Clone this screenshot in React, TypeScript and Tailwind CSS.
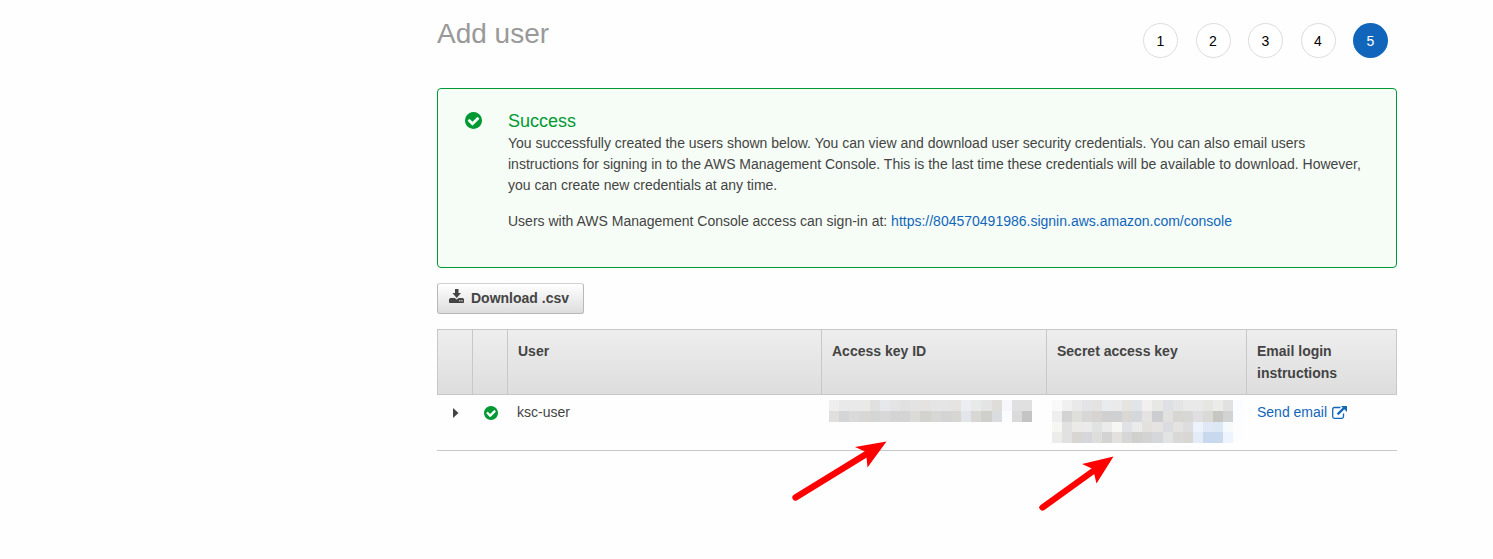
import React from "react";

const keyRows = [
  ["#eeeeee", "#e9e9e9", "#e9e9e9", "#e9e9e8", "#e0e0e0", "#e6e8eb", "#e4e4e4", "#e1e1e1", "#e3e3e3", "#e5e3e1", "#e5e5e5", "#e4e5e4", "#e6e4e2", "#ebedf0", "#e7eae8", "#e4e4e4", "#dfddda", "#f5f7fa", "#e0e0e0", "#e0e0e0"],
  ["#e0dfdd", "#d3d5d7", "#dadada", "#d8d7d6", "#d4d6d5", "#d8d8d8", "#d4d4d4", "#d4d4d4", "#dbdad7", "#d2d2cf", "#d7d7d6", "#d4d4d4", "#d8d6d3", "#e2e5e9", "#d8d7d3", "#cfcfcc", "#dadce0", "#fbfcff", "#dadada", "#c4c4c4"],
];

const secretRows = [
  ["#f9f9f9", "#f0f0f0", "#e9e9e9", "#e3e4e6", "#e4e3e1", "#e9ecef", "#eaeaea", "#e6e4e1", "#e1e4e8", "#f1f0ee", "#e7e7e5", "#dee0e3", "#e4e4e4", "#e9e9e9", "#e7eae8", "#e5e5e2", "#ebebea", "#e1e1e1", "#fafcff"],
  ["#eeeeee", "#d3d3d3", "#dededb", "#d7d7d7", "#d6d4d3", "#d0d0d0", "#cfd0d2", "#dad8d5", "#d4d7dc", "#e5e3e1", "#cbcdd0", "#e1e1e0", "#d7d6d3", "#d7d7d5", "#dfdfe1", "#dbd9d6", "#c6c6c2", "#d0d2d4", "#fcfdfe"],
  ["#f6f6f3", "#e1e1e1", "#ebeae8", "#ebebeb", "#e1e3e2", "#ebebeb", "#f6f6f4", "#e0e2e5", "#ebebeb", "#e2e1de", "#e5e4e2", "#dadce0", "#e5e3e1", "#dddddf", "#edf3fa", "#dfe8f4", "#dbe7f2", "#f7fafd", "#fdfdfe"],
  ["#eeecea", "#e1e1e1", "#d8d6d3", "#d6d7da", "#dddddc", "#d3d3d3", "#e2e1de", "#d6d6d6", "#d0d0cf", "#d3d3d3", "#d6d7da", "#e2e4e3", "#dad9d7", "#d9d7d4", "#e4edf7", "#c9d9ed", "#c9d9ed", "#eef4fd", "#fcfdfe"],
];

function Mosaic({ rows }: { rows: string[][] }) {
  return (
    <div className="flex flex-col">
      {rows.map((row, r) => (
        <div key={r} className="flex h-[10.75px]">
          {row.map((color, c) => (
            <span key={c} className="flex-1" style={{ backgroundColor: color }} />
          ))}
        </div>
      ))}
    </div>
  );
}

function CheckCircle({ className }: { className: string }) {
  return (
    <svg viewBox="0 0 1536 1536" className={className} fill="currentColor">
      <path d="M1284 606q0-28-18-46l-91-90q-19-19-45-19t-45 19l-408 407-226-226q-19-19-45-19t-45 19l-91 90q-18 18-18 46 0 27 18 45l362 362q19 19 45 19 27 0 46-19l543-543q18-18 18-45zm252 162q0 209-103 385.5t-279.5 279.5-385.5 103-385.5-103-279.5-279.5-103-385.5 103-385.5 279.5-279.5 385.5-103 385.5 103 279.5 279.5 103 385.5z" />
    </svg>
  );
}

function DownloadIcon() {
  return (
    <svg viewBox="0 0 15 14" className="h-[14px] w-[15px]" fill="currentColor">
      <path d="M6 0H9.500V4H12L7.700 9 3.500 4H6z" />
      <path
        fillRule="evenodd"
        d="M1.200 9H5.700L7.700 10.500 9.700 9H14L15 10.300V13.200Q15 14 14.200 14H0.800Q0 14 0 13.200V10.300zM10.300 11V12.600H11.300V11zM12.500 11V12.600H13.500V11z"
      />
    </svg>
  );
}

function ExternalIcon() {
  return (
    <svg viewBox="0 0 15 13" className="h-[13px] w-[15px]" fill="none" stroke="currentColor">
      <path d="M8.500 1.500H2.400Q.7 1.500.7 3.200v7.300q0 1.800 1.700 1.800h7.400q1.700 0 1.700-1.800V7.500" strokeWidth="1.300" />
      <path d="M5.600 8.400L12 2" strokeWidth="2.300" />
      <path d="M9 0H15v6z" fill="currentColor" stroke="none" />
    </svg>
  );
}

function Steps() {
  return (
    <ol className="mt-[23px] mr-[9px] flex gap-[17.5px] text-sm">
      {[1, 2, 3, 4, 5].map((n) => (
        <li
          key={n}
          className={
            n === 5
              ? "flex size-[35px] items-center justify-center rounded-full bg-[#1166bb] text-white"
              : "flex size-[35px] items-center justify-center rounded-full border border-[#dddddd] bg-white text-black"
          }
        >
          {n}
        </li>
      ))}
    </ol>
  );
}

export default function App() {
  return (
    <main className="relative h-[559px] overflow-hidden bg-[#fefefe] pl-[437px] font-['Liberation_Sans',Arial,sans-serif] text-sm text-[#444444]">
      <div className="w-[960px]">
        <header className="flex h-[88px] justify-between">
          <h1 className="mt-[14px] text-[28px] leading-[40px] text-[#999999]">Add user</h1>
          <Steps />
        </header>

        <section className="flex h-[180px] rounded-[4px] border border-[#009933] bg-[#f6fdf6] pt-[21px] pl-[27px]">
          <CheckCircle className="mt-[1.5px] size-[17px] shrink-0 text-[#009933]" />
          <div className="ml-[26px] w-[860px]">
            <h2 className="text-lg leading-[22px] text-[#009933]">Success</h2>
            <p className="mt-px leading-[21px]">
              You successfully created the users shown below. You can view and download user security credentials. You can also email users
              <br />
              instructions for signing in to the AWS Management Console. This is the last time these credentials will be available to download. However,
              <br />
              you can create new credentials at any time.
            </p>
            <p className="mt-[15px] leading-[21px]">
              Users with AWS Management Console access can sign-in at:{" "}
              <a className="text-[#1166bb]">https://804570491986.signin.aws.amazon.com/console</a>
            </p>
          </div>
        </section>

        <button className="mt-[15px] flex h-[31px] w-[147px] items-start rounded-[3px] border border-[#b8b8b8] border-t-[#d2d2d2] bg-linear-to-b from-white to-[#dddddd] pt-[4px] pl-[11px] font-bold leading-[21px]">
          <span className="mt-[1px]"><DownloadIcon /></span>
          <span className="ml-[7px]">Download .csv</span>
        </button>

        <table className="mt-[15px] w-[960px] table-fixed border-separate border-spacing-0 text-left">
          <colgroup>
            <col className="w-[35px]" />
            <col className="w-[35px]" />
            <col className="w-[314px]" />
            <col className="w-[225px]" />
            <col className="w-[200px]" />
            <col className="w-[151px]" />
          </colgroup>
          <thead>
            <tr className="h-[66px] bg-linear-to-b from-[#eeeeee] to-[#dddddd] align-top leading-[22px] *:border-y *:border-l *:border-[#c8c8c8] *:px-[10px] *:pt-[10px]">
              <th />
              <th />
              <th>User</th>
              <th>Access key ID</th>
              <th>Secret access key</th>
              <th className="border-r">Email login instructions</th>
            </tr>
          </thead>
          <tbody>
            <tr className="h-[56px] align-top leading-[22px] *:border-b *:border-[#c8c8c8]">
              <td className="pt-[13px] pl-[16px]">
                <svg viewBox="0 0 6 10" className="h-[10px] w-[6px]" fill="currentColor">
                  <path d="M0 0L5.5 5 0 10z" />
                </svg>
              </td>
              <td className="pt-[11px] pl-[12px]">
                <CheckCircle className="size-[14px] text-[#009933]" />
              </td>
              <td className="pt-[6px] pl-[10px]">ksc-user</td>
              <td className="pt-[5px] pl-[8px]">
                <div className="w-[203px]"><Mosaic rows={keyRows} /></div>
              </td>
              <td className="pt-[5px] pl-[6px]">
                <div className="w-[191px]"><Mosaic rows={secretRows} /></div>
              </td>
              <td className="pt-[6px] pl-[11px]">
                <a className="flex items-center gap-[5px] text-[#1166bb]">
                  Send email <ExternalIcon />
                </a>
              </td>
            </tr>
          </tbody>
        </table>
      </div>

      <svg className="absolute top-[430px] left-[780px] h-[90px] w-[345px]" fill="#ff0000" stroke="#ff0000">
        <path d="M15.500 67.500L88 23" strokeWidth="6.300" strokeLinecap="round" />
        <path d="M106.500 11.500L75 17l11 5 1.500 15.500z" stroke="none" />
        <path d="M262.500 77.500L316 39" strokeWidth="6.300" strokeLinecap="round" />
        <path d="M333.500 26.500L302 34l11 5 3.500 14.500z" stroke="none" />
      </svg>
    </main>
  );
}
